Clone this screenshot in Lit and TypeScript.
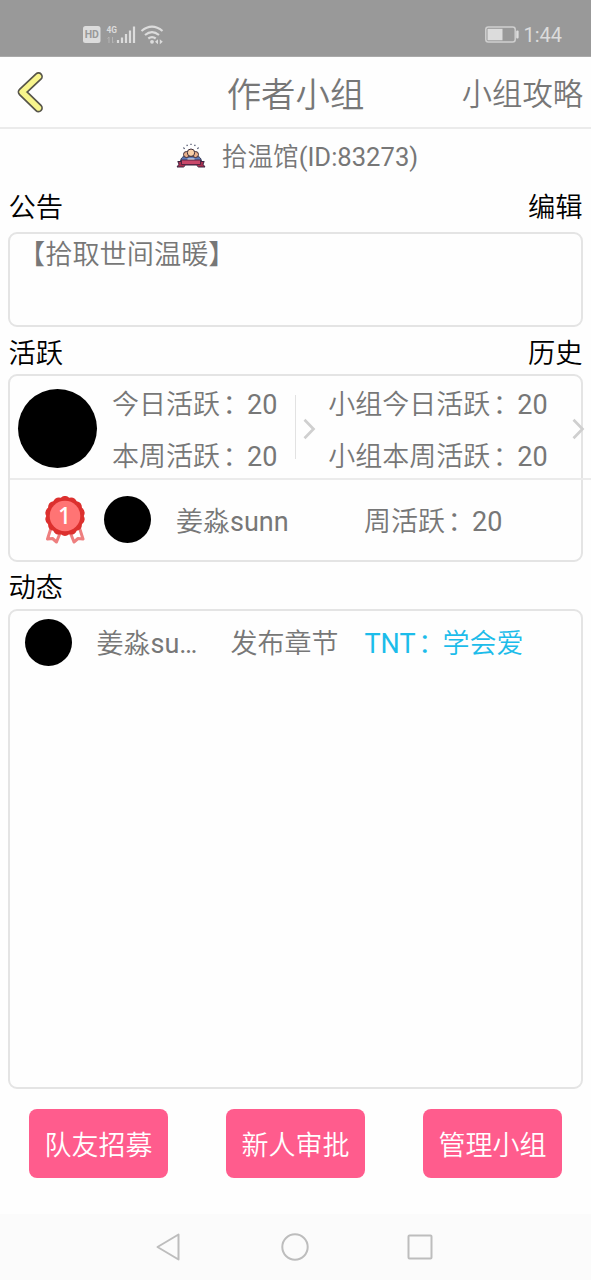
import { LitElement, html, css, svg } from "lit";
import { customElement } from "lit/decorators.js";

const scallop = (() => {
  const n = 14;
  let d = "";
  for (let i = 0; i <= n; i++) {
    const a = (i / n) * Math.PI * 2 - Math.PI / 2 - Math.PI / n;
    const x = (20 + 18.8 * Math.cos(a)).toFixed(2);
    const y = (20 + 18.8 * Math.sin(a)).toFixed(2);
    d += i === 0 ? `M${x} ${y}` : `A6.5 6.5 0 0 1 ${x} ${y}`;
  }
  return d + "Z";
})();

const chevron = html`<svg class="chev" width="14" height="24" viewBox="0 0 14 24">
  <path d="M1.500 2.800L10.500 12L1.500 21.200" fill="none" stroke="#cfcfcf" stroke-width="2.700" />
</svg>`;

const colon = html`<span class="colon">：</span>`;

const rays = [
  [7.5, 4.5, 8.5, 5.8],
  [10.8, 1.8, 11.4, 3],
  [15, 0.8, 15, 2],
  [19.2, 1.8, 18.6, 3],
  [22.5, 4.5, 21.5, 5.8],
];

@customElement("app-root")
export class AppRoot extends LitElement {
  static styles = css`
    :host {
      display: flex;
      flex-direction: column;
      width: 591px;
      height: 1280px;
      overflow: hidden;
      background: #fefefe;
      color: #777;
      font: 350 27px/36px Roboto, "Noto Sans CJK SC", sans-serif;
      white-space: nowrap;
    }
    * { box-sizing: border-box; }
    svg { display: block; flex: none; }
    .status {
      flex: none;
      height: 57px;
      padding: 12px 29px 0 83px;
      background: #999;
      border-bottom: 1px solid #aaa;
      display: flex;
      justify-content: space-between;
    }
    .clock { display: flex; color: #dcdcdc; font: 400 20px/46px Roboto, sans-serif; }
    .clock svg { margin-right: 4px; }
    .header {
      flex: none;
      height: 72px;
      border-bottom: 2px solid #ebebeb;
      padding: 1px 8px 0 16px;
      display: grid;
      grid-template-columns: 1fr auto 1fr;
      align-items: center;
    }
    .title { font-size: 34.4px; line-height: 46px; padding-top: 5px; margin: 0 4px 0 -4px; }
    .guide { font-size: 30.3px; line-height: 46px; padding-top: 5px; text-align: right; }
    .group {
      flex: none;
      height: 55px;
      padding-left: 3px;
      display: flex;
      justify-content: center;
      align-items: center;
      gap: 16px;
    }
    .group svg { margin-top: -2px; }
    .idtext { font-size: 25.6px; }
    .num { font-weight: 400; }
    .colon { padding-left: 2.5px; margin-right: -2.5px; }
    .label {
      flex: none;
      padding: 0 8.5px;
      display: flex;
      justify-content: space-between;
      color: #000;
      height: 48px;
      line-height: 49px;
      font-size: 27.3px;
    }
    .box { flex: none; margin: 0 8px; border: 2px solid #e4e4e4; border-radius: 9px; }
    .notice { height: 95px; padding: 3px 0 0 8px; font-size: 27.2px; }
    .l2 { height: 47px; line-height: 54px; }
    .l3 { height: 47px; line-height: 52px; }
    .active { height: 188px; }
    .summary { display: flex; height: 104px; align-items: center; width: 581px; border-bottom: 2px solid #ebebeb; }
    .disc { flex: none; border-radius: 50%; background: #000; width: 47px; height: 47px; }
    .big { width: 79px; height: 79px; margin: 2px 15px 0 8px; }
    .stats { display: flex; flex-direction: column; gap: 16px; padding-top: 7px; }
    .sep { width: 1px; height: 64px; background: #e2e2e2; margin: 0 7px 0 18px; }
    .gstats { margin-left: 11px; flex: 1; }
    .chev { margin-top: 4px; }
    .last { margin-right: 5px; }
    .rank { display: flex; align-items: center; height: 79px; padding-left: 34.5px; }
    .rank .disc { margin-left: 18.5px; }
    .rname { width: 188px; margin-left: 25px; padding-top: 5px; }
    .rweek { padding-top: 5px; }
    .feed { height: 480px; padding: 8px 0 0 15px; }
    .item { display: flex; align-items: center; }
    .iname { width: 105px; margin-left: 24.5px; padding-top: 3px; }
    .iact { margin-left: 29px; padding-top: 3px; }
    .ilink { margin-left: 26px; color: #1cbcea; padding-top: 3px; }
    .actions { flex: 1; display: flex; justify-content: space-between; align-items: flex-start; padding: 20px 29px 0; }
    .btn {
      width: 139px;
      height: 69px;
      border: 0;
      border-radius: 8px;
      background: #ff5c8d;
      color: #fff;
      font: inherit;
      line-height: 69px;
      padding: 3px 0 0;
      text-align: center;
    }
    .nav { flex: none; height: 66px; background: #fbfbfb; display: flex; justify-content: center; align-items: center; gap: 98px; padding-right: 2px; }
  `;

  render() {
    return html`
      <div class="status">
        <svg width="82" height="40" viewBox="83 12 82 40">
          <rect x="83" y="26" width="17.500" height="17" rx="2.500" fill="#dcdcdc" />
          <text x="91.800" y="38.300" text-anchor="middle" font-family="Roboto" font-weight="700" font-size="10.500" fill="#999">HD</text>
          <text x="106.500" y="33" font-family="Roboto" font-weight="700" font-size="9.500" textLength="10.500" lengthAdjust="spacingAndGlyphs" fill="#dcdcdc">4G</text>
          <path d="M109 37v6m-1.500-4.500l1.500-1.500M112.500 43v-6m1.500 4.500l-1.500 1.500" stroke="#b4b4b4" fill="none" />
          <path d="M118 40v3M122 37.500v5.500M126 34v9M130 30.500v12.500M134 26.500v16.500" stroke="#dcdcdc" stroke-width="2.200" />
          <path d="M141.500 31q10.500-8.600 21 0M145 35q7-5.600 14 0M148.300 38.500q3.700-2.800 7.400 0" fill="none" stroke="#dcdcdc" stroke-width="2.200" />
          <circle cx="152" cy="41.800" r="1.900" fill="#dcdcdc" />
          <path d="M155 41.800l3-2.500v5zM162.800 41.800l-3-2.500v5z" fill="#dcdcdc" />
        </svg>
        <div class="clock">
          <svg width="34" height="40" viewBox="485 12 34 40">
            <rect x="485.800" y="27" width="29.400" height="15" rx="2.500" fill="none" stroke="#cfcfcf" stroke-width="1.500" />
            <rect x="487.500" y="28.800" width="15" height="11.500" fill="#dcdcdc" />
            <rect x="516.200" y="30.500" width="2.400" height="8" rx="1" fill="#dcdcdc" />
          </svg>
          <span>1:44</span>
        </div>
      </div>
      <div class="header">
        <svg width="30" height="42" viewBox="16 72 30 42" fill="none" stroke-linecap="round" stroke-linejoin="round">
          <path d="M38.500 76.500L22 92L38.500 108" stroke="#57554a" stroke-width="8.800" />
          <path d="M38.500 76.500L22 92L38.500 108" stroke="#f8f58c" stroke-width="5.400" />
        </svg>
        <div class="title">作者小组</div>
        <div class="guide">小组攻略</div>
      </div>
      <div class="group">
        <svg width="30" height="26" viewBox="0 0 30 26">
          ${rays.map(([a, b, c, d]) => svg`<path d="M${a} ${b}L${c} ${d}" stroke="#333a55" stroke-width="1.1" />`)}
          <path d="M4.500 20c0-5 2-6.500 4.500-6.500h12c2.500 0 4.500 1.500 4.500 6.500z" fill="#5b78b8" stroke="#252b48" />
          <circle cx="10.500" cy="11.500" r="3" fill="#e9b08b" stroke="#3b2b38" />
          <circle cx="19.500" cy="11.500" r="3" fill="#e9b08b" stroke="#3b2b38" />
          <path d="M11.500 18v-2.500h7v2.500z" fill="#f3f5fa" />
          <circle cx="15" cy="9.700" r="3.700" fill="#f9d0a8" stroke="#3b2b38" />
          <path d="M1 24l2-2.800-1.200-2.700h26.400L27 21.200l2 2.800h-6.500l-2.200-2H9.700l-2.200 2z" fill="#a92f4f" stroke="#3b2440" />
          <path d="M5.500 17h19v4.500h-19z" fill="#c9486a" stroke="#4b2440" stroke-width=".9" />
        </svg>
        <span class="idtext">拾温馆<span class="num">(ID:83273)</span></span>
      </div>
      <div class="label"><span>公告</span><span>编辑</span></div>
      <div class="box notice">【拾取世间温暖】</div>
      <div class="label l2"><span>活跃</span><span>历史</span></div>
      <div class="box active">
        <div class="summary">
          <div class="disc big"></div>
          <div class="stats">
            <span>今日活跃${colon}<span class="num">20</span></span>
            <span>本周活跃${colon}<span class="num">20</span></span>
          </div>
          <div class="sep"></div>
          ${chevron}
          <div class="stats gstats">
            <span>小组今日活跃${colon}<span class="num">20</span></span>
            <span>小组本周活跃${colon}<span class="num">20</span></span>
          </div>
          <div class="last">${chevron}</div>
        </div>
        <div class="rank">
          <svg width="41" height="48" viewBox="0 0 41 48">
            <path d="M6 32L2.500 43l5-.5 4 3.500L15.500 36M34.500 32L38 43l-5-.5-4 3.500L25 36" fill="#fff" stroke="#ee7f7f" stroke-width="3" stroke-linejoin="round" />
            <path d="${scallop}" fill="#dc302e" />
            <circle cx="20" cy="20" r="15.300" fill="#ff7474" />
            <text x="19.500" y="28" text-anchor="middle" font-family="Noto Sans" font-weight="500" font-size="23" fill="#fff">1</text>
          </svg>
          <div class="disc"></div>
          <div class="rname">姜淼<span class="num">sunn</span></div>
          <div class="rweek">周活跃${colon}<span class="num">20</span></div>
        </div>
      </div>
      <div class="label l3"><span>动态</span></div>
      <div class="box feed">
        <div class="item">
          <div class="disc"></div>
          <div class="iname">姜淼<span class="num">su…</span></div>
          <div class="iact">发布章节</div>
          <div class="ilink"><span class="num">TNT</span>${colon}学会爱</div>
        </div>
      </div>
      <div class="actions">
        <button class="btn">队友招募</button>
        <button class="btn">新人审批</button>
        <button class="btn">管理小组</button>
      </div>
      <div class="nav">
        <svg width="28" height="30" viewBox="0 0 28 30"><path d="M2.500 15L23.500 2.500V27.500z" fill="none" stroke="#bdbdbd" stroke-width="2" stroke-linejoin="round" /></svg>
        <svg width="28" height="30" viewBox="0 0 28 30"><circle cx="14" cy="15" r="12.700" fill="none" stroke="#bdbdbd" stroke-width="2" /></svg>
        <svg width="28" height="30" viewBox="0 0 28 30"><rect x="1.500" y="3.500" width="23" height="23" rx="1" fill="none" stroke="#bdbdbd" stroke-width="2" /></svg>
      </div>
    `;
  }
}
